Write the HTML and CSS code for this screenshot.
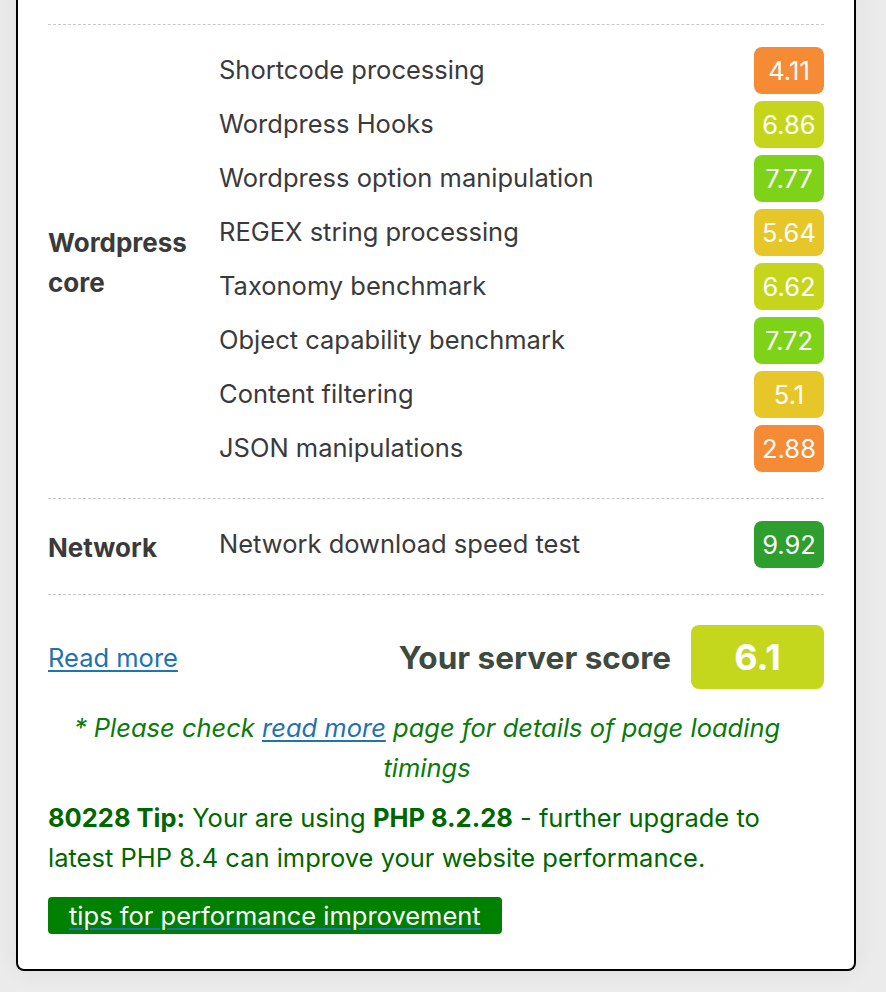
FILE: index.html
```html
<!DOCTYPE html>
<html lang="en">
<head>
<meta charset="utf-8">
<title>Server benchmark</title>
<link rel="stylesheet" href="styles.css">
</head>
<body>
<div class="card">
  <section class="group">
    <div class="cat">Wordpress core</div>
    <div class="rows">
      <div class="row"><span class="name">Shortcode processing</span><span class="badge c-orange">4.11</span></div>
      <div class="row"><span class="name">Wordpress Hooks</span><span class="badge c-lime">6.86</span></div>
      <div class="row"><span class="name">Wordpress option manipulation</span><span class="badge c-green">7.77</span></div>
      <div class="row"><span class="name">REGEX string processing</span><span class="badge c-yellow">5.64</span></div>
      <div class="row"><span class="name">Taxonomy benchmark</span><span class="badge c-lime">6.62</span></div>
      <div class="row"><span class="name">Object capability benchmark</span><span class="badge c-green">7.72</span></div>
      <div class="row"><span class="name">Content filtering</span><span class="badge c-yellow">5.1</span></div>
      <div class="row"><span class="name">JSON manipulations</span><span class="badge c-orange">2.88</span></div>
    </div>
  </section>
  <section class="group">
    <div class="cat">Network</div>
    <div class="rows">
      <div class="row"><span class="name">Network download speed test</span><span class="badge c-dark">9.92</span></div>
    </div>
  </section>
  <div class="score-row">
    <a href="#" class="read-more">Read more</a>
    <div class="score">
      <span class="score-label">Your server score</span>
      <span class="score-box">6.1</span>
    </div>
  </div>
  <p class="note">* Please check <a href="#">read more</a> page for details of page loading timings</p>
  <p class="tip"><b>80228 Tip:</b> Your are using <b>PHP 8.2.28</b> - further upgrade to latest PHP 8.4 can improve your website performance.</p>
  <a class="tips-btn" href="#">tips for performance improvement</a>
</div>
</body>
</html>
```
FILE: styles.css
```css
html, body {
  margin: 0;
  padding: 0;
}
body {
  background: #ebebeb;
  font-family: Inter, "Liberation Sans", Arial, sans-serif;
  font-size: 25.5px;
  color: #3a3a3a;
  padding: 0 30px 22px 16px;
}
.card {
  margin-top: -20px;
  background: #fff;
  border: 2px solid #000;
  border-radius: 8px;
  padding: 42px 30px 35px 30px;
  box-shadow: 0 0 24px rgba(0, 0, 0, 0.06);
}
.group {
  border-top: 1px dashed #c8c8c8;
  padding: 18px 0 23px;
  display: grid;
  grid-template-columns: 171px 1fr;
  align-items: center;
}
.cat {
  font-weight: 700;
  font-size: 26px;
  line-height: 40px;
  padding-right: 12px;
  padding-top: 8px;
}
.row {
  height: 54px;
  display: flex;
  align-items: center;
  justify-content: space-between;
}
.name {
  line-height: 30px;
}
.badge {
  width: 70px;
  height: 47px;
  border-radius: 8px;
  color: #fff;
  display: flex;
  align-items: center;
  justify-content: center;
}
.c-orange { background: #f68b35; }
.c-lime { background: #c5d51c; }
.c-green { background: #7ed319; }
.c-yellow { background: #e7c62a; }
.c-dark { background: #2e9e2f; }
.score-row {
  border-top: 1px dashed #c8c8c8;
  padding-top: 30px;
  display: flex;
  align-items: center;
  justify-content: space-between;
}
.read-more {
  color: #2271b1;
  text-decoration: underline;
  text-underline-offset: 3px;
}
.score {
  display: flex;
  align-items: center;
  gap: 20px;
}
.score-label {
  font-size: 31.5px;
  font-weight: 700;
  color: #3e4a40;
}
.score-box {
  width: 133px;
  height: 64px;
  border-radius: 8px;
  background: #c4d71d;
  color: #fff;
  font-size: 36px;
  font-weight: 700;
  display: flex;
  align-items: center;
  justify-content: center;
}
.note {
  margin: 19px 18px 0 0;
  text-align: center;
  font-style: italic;
  color: #0a7a0a;
  line-height: 40px;
}
.note a {
  color: #2271b1;
  text-decoration: underline;
  text-underline-offset: 3px;
}
.tip {
  margin: 10px 0 0;
  color: #006700;
  line-height: 40px;
}
.tips-btn {
  display: inline-block;
  margin-top: 19px;
  background: #008000;
  color: #fff;
  border-radius: 4px;
  padding: 0 21px 0 21px;
  line-height: 37px;
  text-decoration: underline;
  text-decoration-color: #2271b1;
  text-underline-offset: 3px;
}
```
